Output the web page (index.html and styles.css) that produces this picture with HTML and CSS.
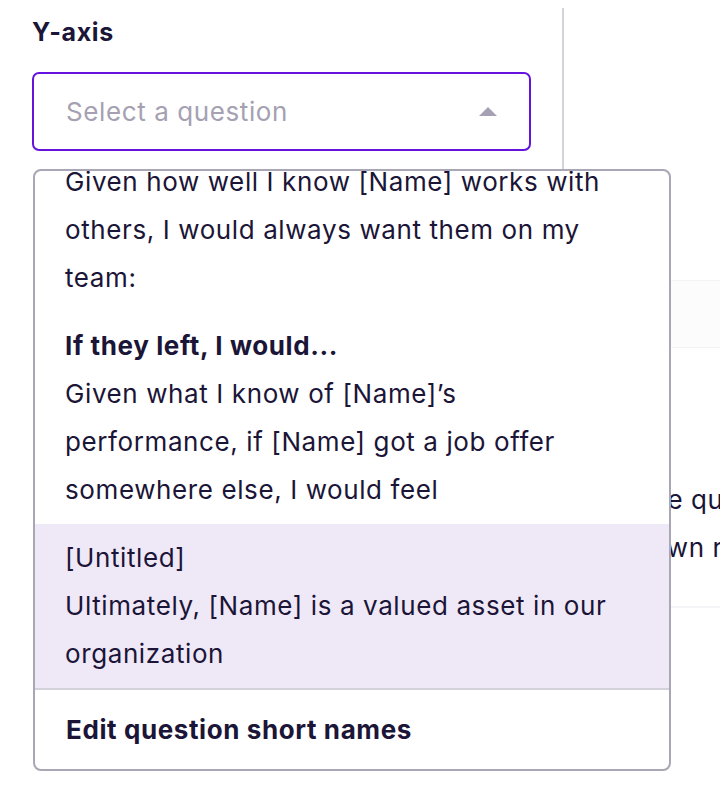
FILE: index.html
```html
<!DOCTYPE html>
<html lang="en">
<head>
    <meta charset="UTF-8">
    <meta name="viewport" content="width=device-width, initial-scale=1.0">
    <title>Chart Axes</title>
    <link rel="stylesheet" href="styles.css">
</head>
<body>
    <div class="page">
        <div class="sidebar">
            <label class="field-label" for="yAxis">Y-axis</label>
            <div class="select-wrap">
                <div class="select" id="yAxis">
                    <span class="placeholder">Select a question</span>
                    <span class="caret"></span>
                </div>

                <div class="menu">
                    <div class="menu-list">
                        <div class="menu-scroll">
                            <div class="option">
                                <div class="option-title">Team player</div>
                                <div>Given how well I know [Name] works with others, I would always want them on my team:</div>
                            </div>
                            <div class="option">
                                <div class="option-title">If they left, I would...</div>
                                <div>Given what I know of [Name]’s performance, if [Name] got a job offer somewhere else, I would feel</div>
                            </div>
                            <div class="option active">
                                <div>[Untitled]</div>
                                <div>Ultimately, [Name] is a valued asset in our organization</div>
                            </div>
                        </div>
                    </div>
                    <div class="menu-footer">Edit question short names</div>
                </div>
            </div>
        </div>

        <div class="content">
            <div class="chart-box"></div>
            <p class="hint">Pick the questions you want to compare.</p>
            <p class="hint">As shown rankings update live.</p>
            <div class="rule"></div>
        </div>
    </div>
</body>
</html>
```

FILE: styles.css
```css
body {
    margin: 0;
    font-family: 'Inter', 'Noto Sans', sans-serif;
    letter-spacing: 0.6px;
    color: #1b1537;
    background-color: #fff;
    overflow: hidden;
    height: 804px;
}

.page {
    display: flex;
    width: 720px;
}

.sidebar {
    width: 530px;
    flex-shrink: 0;
    margin-top: 8px;
    padding-left: 32px;
    height: 700px;
    border-right: 2px solid #d4d3da;
}

.field-label {
    display: block;
    font-size: 25px;
    font-weight: 700;
    line-height: 48px;
    margin-bottom: 16px;
}

.select-wrap {
    position: relative;
    width: 499px;
}

.select {
    display: flex;
    align-items: center;
    justify-content: space-between;
    height: 75px;
    padding: 0 32px;
    border: 2px solid #6512dc;
    border-radius: 7px;
}

.placeholder {
    font-size: 26px;
    color: #a5a1b2;
}

.caret {
    width: 0;
    height: 0;
    border-left: 9px solid transparent;
    border-right: 9px solid transparent;
    border-bottom: 9px solid #a5a1b2;
}

.menu {
    position: absolute;
    top: 97px;
    left: 1px;
    width: 634px;
    height: 598px;
    display: flex;
    flex-direction: column;
    background-color: #fff;
    border: 2px solid #a9a6b6;
    border-radius: 8px;
    overflow: hidden;
    z-index: 2;
}

.menu-list {
    flex: 1;
    overflow: hidden;
}

.menu-scroll {
    margin-top: -71px;
}

.option {
    padding: 10px 50px 10px 30px;
    font-size: 26px;
    line-height: 48px;
}

.option-title {
    font-weight: 700;
}

.option.active {
    background-color: #efe8f7;
}

.menu-footer {
    height: 79px;
    display: flex;
    align-items: center;
    padding-left: 31px;
    border-top: 2px solid #d3d1da;
    font-size: 26px;
    font-weight: 700;
}

.content {
    flex: 1;
    padding-top: 280px;
    padding-left: 16px;
    white-space: nowrap;
}

.chart-box {
    height: 66px;
    margin-left: -16px;
    background-color: #fcfcfd;
    border-top: 1px solid #f4f4f6;
    border-bottom: 1px solid #f4f4f6;
}

.hint {
    margin: 0;
    font-size: 26px;
    line-height: 48px;
}

.hint:first-of-type {
    margin-top: 128px;
}

.rule {
    margin-top: 34px;
    margin-left: -16px;
    border-top: 2px solid #f4f4f6;
}
```
